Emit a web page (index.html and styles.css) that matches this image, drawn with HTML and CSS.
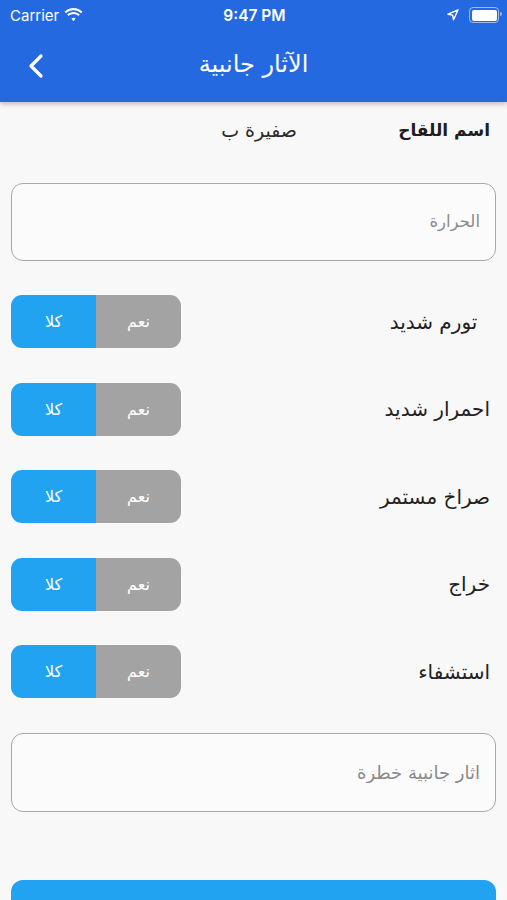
FILE: index.html
```html
<!DOCTYPE html>
<html lang="ar">
<head>
    <meta charset="UTF-8">
    <meta name="viewport" content="width=device-width, initial-scale=1.0">
    <title>الآثار جانبية</title>
    <link rel="stylesheet" href="styles.css">
</head>
<body>
    <header class="top">
        <div class="status-bar">
            <div class="status-left">
                <span>Carrier</span>
                <svg class="wifi" width="19" height="14" viewBox="0 0 19 14">
                    <path d="M9.5 2.2c2.9 0 5.5 1.1 7.5 3l1.5-1.5C16.1 1.4 12.9 0 9.5 0S2.9 1.4.5 3.7L2 5.2c2-1.9 4.6-3 7.5-3z" fill="#fff"/>
                    <path d="M9.5 6c1.8 0 3.5.7 4.8 1.9l1.5-1.5C14.1 4.8 11.9 3.9 9.5 3.9S4.9 4.8 3.2 6.4l1.5 1.5C6 6.7 7.7 6 9.5 6z" fill="#fff"/>
                    <path d="M9.5 9.8c.8 0 1.5.3 2.1.8L9.5 13.2 7.4 10.6c.6-.5 1.3-.8 2.1-.8z" fill="#fff"/>
                </svg>
            </div>
            <div class="status-time">9:47 PM</div>
            <div class="status-right">
                <svg width="12" height="12" viewBox="0 0 12 12">
                    <path d="M11 1 1 5.2l4.6.9.9 4.6z" fill="none" stroke="#fff" stroke-width="1.4" stroke-linejoin="round"/>
                </svg>
                <div class="battery"><div class="battery-fill"></div></div>
            </div>
        </div>
        <div class="app-bar">
            <button class="back" aria-label="رجوع">
                <svg width="22" height="26" viewBox="0 0 22 26">
                    <polyline points="15,3 5,13 15,23" fill="none" stroke="#fff" stroke-width="3.2" stroke-linecap="round" stroke-linejoin="round"/>
                </svg>
            </button>
            <h1>الآثار جانبية</h1>
        </div>
    </header>

    <main class="form">
        <div class="vaccine-row">
            <span class="vaccine-label">اسم اللقاح</span>
            <span class="vaccine-name">صفيرة ب</span>
        </div>

        <input class="field" type="text" placeholder="الحرارة">

        <div class="toggle-row">
            <span class="toggle-label">&nbsp;&nbsp;تورم شديد</span>
            <div class="toggle">
                <span class="opt opt-yes">نعم</span>
                <span class="opt opt-no">كلا</span>
            </div>
        </div>

        <div class="toggle-row">
            <span class="toggle-label">احمرار شديد</span>
            <div class="toggle">
                <span class="opt opt-yes">نعم</span>
                <span class="opt opt-no">كلا</span>
            </div>
        </div>

        <div class="toggle-row">
            <span class="toggle-label">صراخ مستمر</span>
            <div class="toggle">
                <span class="opt opt-yes">نعم</span>
                <span class="opt opt-no">كلا</span>
            </div>
        </div>

        <div class="toggle-row">
            <span class="toggle-label">خراج</span>
            <div class="toggle">
                <span class="opt opt-yes">نعم</span>
                <span class="opt opt-no">كلا</span>
            </div>
        </div>

        <div class="toggle-row">
            <span class="toggle-label">استشفاء</span>
            <div class="toggle">
                <span class="opt opt-yes">نعم</span>
                <span class="opt opt-no">كلا</span>
            </div>
        </div>

        <input class="field field-wide" type="text" placeholder="اثار جانبية خطرة">

        <button class="submit" aria-label="حفظ"></button>
    </main>
</body>
</html>
```

FILE: styles.css
```css
html, body {
    margin: 0;
    padding: 0;
}

body {
    width: 507px;
    height: 900px;
    overflow: hidden;
    background-color: #f8f8f8;
    font-family: "DejaVu Sans", "Noto Sans", sans-serif;
    color: #1e1e1e;
}

.top {
    background-color: #2469e0;
    box-shadow: 0 2px 5px rgba(0, 0, 0, 0.25);
    position: relative;
}

.status-bar {
    height: 30px;
    display: flex;
    align-items: center;
    justify-content: space-between;
    padding: 0 8px 0 10px;
    color: #fff;
    font-family: "Inter", "Liberation Sans", sans-serif;
    font-size: 15px;
}

.status-left {
    display: flex;
    align-items: center;
    gap: 5px;
    width: 120px;
}

.status-time {
    font-weight: 600;
    font-size: 15.5px;
}

.status-right {
    display: flex;
    align-items: center;
    justify-content: flex-end;
    gap: 10px;
    width: 120px;
}

.battery {
    width: 25px;
    height: 11px;
    border: 1.5px solid rgba(255, 255, 255, 0.55);
    border-radius: 4px;
    padding: 1.5px;
    position: relative;
}

.battery::after {
    content: "";
    position: absolute;
    right: -4px;
    top: 4px;
    width: 2px;
    height: 4px;
    border-radius: 0 2px 2px 0;
    background-color: rgba(255, 255, 255, 0.55);
}

.battery-fill {
    width: 100%;
    height: 100%;
    background-color: #fff;
    border-radius: 2px;
}

.app-bar {
    height: 72px;
    display: flex;
    align-items: center;
    justify-content: center;
    position: relative;
}

.back {
    position: absolute;
    left: 26px;
    top: 23px;
    background: none;
    border: none;
    padding: 0;
}

.app-bar h1 {
    margin: 0 0 4px 0;
    color: #fff;
    font-size: 24px;
    font-weight: normal;
    direction: rtl;
}

.form {
    direction: rtl;
    display: flex;
    flex-direction: column;
    gap: 34.5px;
    padding: 12px 11px 0 11px;
}

.vaccine-row {
    display: flex;
    align-items: center;
    height: 32px;
    padding-right: 6px;
    margin-bottom: 2px;
}

.vaccine-label {
    width: 193px;
    font-weight: bold;
    font-size: 17px;
}

.vaccine-name {
    font-size: 19px;
    color: #2a2a2a;
}

.field {
    display: block;
    box-sizing: border-box;
    width: 100%;
    height: 78px;
    border: 1.5px solid #a8a8a8;
    border-radius: 12px;
    background-color: #fbfbfb;
    padding: 0 15px;
    font-family: "DejaVu Sans", sans-serif;
    font-size: 16.5px;
    direction: rtl;
    text-align: right;
}

.field-wide {
    font-size: 18px;
    height: 79px;
}

.field::placeholder {
    color: #8a8a8a;
}

.toggle-row {
    display: flex;
    align-items: center;
    justify-content: space-between;
    height: 53px;
}

.toggle-label {
    font-size: 20px;
    padding-right: 6px;
    color: #222;
}

.toggle {
    display: flex;
    width: 170px;
    height: 53px;
    border-radius: 11px;
    overflow: hidden;
}

.opt {
    flex: 1;
    display: flex;
    align-items: center;
    justify-content: center;
    color: #fff;
    font-size: 16px;
}

.opt-yes {
    background-color: #a3a3a3;
}

.opt-no {
    background-color: #21a3f1;
}

.submit {
    margin-top: 34px;
    height: 56px;
    border: none;
    border-radius: 12px;
    background-color: #21a3f1;
}
```
